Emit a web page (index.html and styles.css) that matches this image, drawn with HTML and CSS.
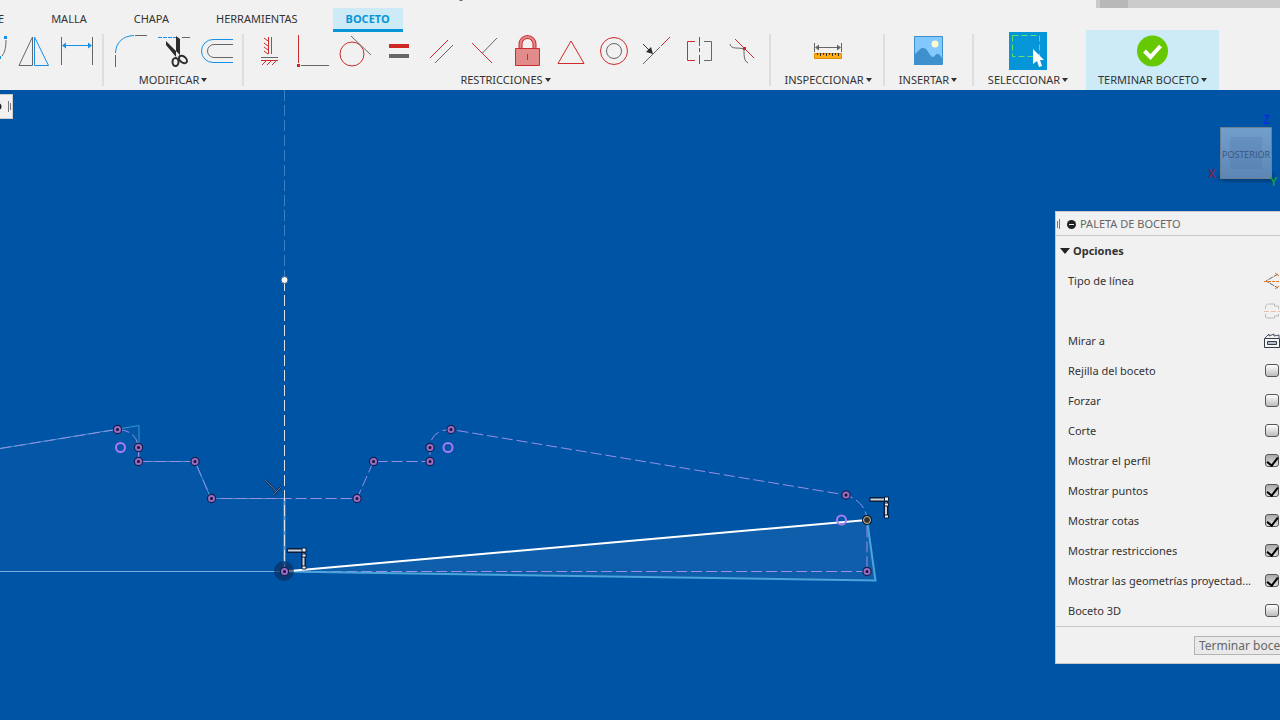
FILE: index.html
```html
<!DOCTYPE html>
<html lang="es">
<head>
<meta charset="utf-8">
<title>Boceto</title>
<link rel="stylesheet" href="styles.css">
</head>
<body>
<header class="ribbon">
  <div class="window-strip"><span class="window-strip-thumb"></span></div>
  <span class="top-mark"></span>
  <nav class="tabs">
    <button class="tab tab-first">E</button>
    <button class="tab">MALLA</button>
    <button class="tab">CHAPA</button>
    <button class="tab">HERRAMIENTAS</button>
    <button class="tab tab-active">BOCETO</button>
  </nav>
  <div class="tools">
    <section class="group group-create">
      <div class="icons">
        <button class="tool" aria-label="Spline"><svg width="42" height="38" viewBox="0 0 42 38"><path class="gray" d="M36 8C36 18 34 21 32 24"/><path class="bluefill" d="M34 4h3v3h-3zM28 24h3v3h-3z"/></svg></button>
        <button class="tool" aria-label="Simetría"><svg width="42" height="38" viewBox="0 0 42 38"><path class="gray" d="M19.500 5V33.500H6z"/><path class="blue" d="M21.500 5V33.500H35.500z"/></svg></button>
        <button class="tool" aria-label="Cota"><svg width="42" height="38" viewBox="0 0 42 38"><path class="gray" d="M5.500 5v28M36.500 5v28"/><path class="blue" d="M8 13.500h26"/><path class="bluefill" d="M6 13.500l4-3v6zM36 13.500l-4-3v6z"/></svg></button>
      </div>
    </section>
    <section class="group group-modify">
      <div class="icons">
        <button class="tool" aria-label="Empalme"><svg width="42" height="38" viewBox="0 0 42 38"><path class="blue" d="M6.500 21C7 10 14 4 25 3.500"/><path class="gray" d="M6.500 23v12M26 3.500h12"/></svg></button>
        <button class="tool" aria-label="Recortar"><svg width="42" height="38" viewBox="0 0 42 38"><path class="blue" d="M6 5.500h20" stroke-dasharray="4 1"/><path class="gray" d="M30 5.500h8"/><path class="ink" d="M14 9v4l10 12 5-1zM24 4l4 3v16l-4 3z"/><ellipse class="loop" cx="23.500" cy="30" rx="3" ry="4"/><ellipse class="loop" cx="31" cy="27.500" rx="3" ry="4.500" transform="rotate(-50 31 27.500)"/></svg></button>
        <button class="tool" aria-label="Desfase"><svg width="42" height="38" viewBox="0 0 42 38"><path class="blue" d="M38 7.500H18a11.500 11.500 0 0 0 0 23h20"/><path class="gray" d="M38 12.500H19a6.500 6.500 0 0 0 0 13h19"/></svg></button>
      </div>
      <button class="group-label">MODIFICAR<i class="caret"></i></button>
    </section>
    <section class="group group-constraints">
      <div class="icons">
        <button class="tool" aria-label="Horizontal/Vertical"><svg width="42" height="38" viewBox="0 0 42 38"><path class="red" d="M20.500 5v17M20 9l-4-3M20 14l-4-3M20 18l-4-3M20 22l-4-3M13 28.500h17M18 29l-4 4M23 29l-4 4M28 29l-4 4"/><path class="gray" d="M23.500 5v17M13 25.500h17"/></svg></button>
        <button class="tool" aria-label="Coincidente"><svg width="42" height="38" viewBox="0 0 42 38"><path class="red" d="M7.500 3v28"/><path class="redfill" d="M6 32h3v3H6z"/><path class="gray" d="M10 33.500h28"/></svg></button>
        <button class="tool" aria-label="Tangente"><svg width="42" height="38" viewBox="0 0 42 38"><circle class="red" cx="18" cy="22" r="12"/><path class="gray" d="M17 4l20 19"/></svg></button>
        <button class="tool" aria-label="Igual"><svg width="42" height="38" viewBox="0 0 42 38"><path class="redfill" d="M12 12h20v4H12z"/><path class="grayfill" d="M12 22h20v4H12z"/></svg></button>
        <button class="tool" aria-label="Paralelo"><svg width="42" height="38" viewBox="0 0 42 38"><path class="red" d="M10 26L28 8"/><path class="gray" d="M15 31l18-18"/></svg></button>
        <button class="tool" aria-label="Perpendicular"><svg width="42" height="38" viewBox="0 0 42 38"><path class="red" d="M9 11l20 20"/><path class="gray" d="M19.500 21L34 6"/></svg></button>
        <button class="tool" aria-label="Fijar"><svg width="42" height="38" viewBox="0 0 42 38"><path class="shackle" d="M14.500 17V12a7 7 0 0 1 14 0v5"/><path class="shackle-fill" d="M14.500 17V12a7 7 0 0 1 14 0v5"/><path class="lock" d="M9.500 16.500h24v17h-24z"/><path class="red" d="M21.500 22v6"/></svg></button>
        <button class="tool" aria-label="Punto medio"><svg width="42" height="38" viewBox="0 0 42 38"><path class="red" d="M22 9L9 31.500h26z"/></svg></button>
        <button class="tool" aria-label="Concéntrico"><svg width="42" height="38" viewBox="0 0 42 38"><circle class="red" cx="22" cy="19" r="13.500"/><circle class="gray" cx="22" cy="19" r="7.500"/></svg></button>
        <button class="tool" aria-label="Colineal"><svg width="42" height="38" viewBox="0 0 42 38"><path class="gray" d="M8 32l17-17"/><path class="red" d="M26 14l9-9"/><path class="darkline" d="M8 12l7 7"/><path class="ink" d="M18 22l-7-2 5-5z"/></svg></button>
        <button class="tool" aria-label="Simétrico"><svg width="42" height="38" viewBox="0 0 42 38"><path class="red" d="M17 9.500H9.500v19H17M21.500 5v9M21.500 16v4M21.500 23v9"/><path class="gray" d="M26 9.500h7.500v19H26"/></svg></button>
        <button class="tool" aria-label="Curvatura"><svg width="42" height="38" viewBox="0 0 42 38"><path class="gray" d="M9 12c1 6 9 3 14 5 0 7 0 12 4 14"/><path class="red" d="M14 7l19 19"/><path class="redfill" d="M22 15h3v3h-3z"/></svg></button>
      </div>
      <button class="group-label">RESTRICCIONES<i class="caret"></i></button>
    </section>
    <section class="group group-inspect">
      <div class="icons">
        <button class="tool" aria-label="Medir"><svg width="42" height="38" viewBox="0 0 42 38"><path class="gray" d="M7.500 11v9M34.500 11v9M9 15.500h24"/><path class="grayfill" d="M8 15.500l4-3v6zM34 15.500l-4-3v6z"/><path class="ruler" d="M7.500 21.500h27v5h-27z"/><path class="darkline" d="M10.500 21v2M13.500 21v3M16.500 21v2M19.500 21v3M22.500 21v2M25.500 21v3M28.500 21v2M31.500 21v3"/></svg></button>
      </div>
      <button class="group-label">INSPECCIONAR<i class="caret"></i></button>
    </section>
    <section class="group group-insert">
      <div class="icons">
        <button class="tool" aria-label="Imagen"><svg width="42" height="38" viewBox="0 0 42 38"><path fill="#83c9ff" d="M7 4h28v29H7z"/><path fill="#3e91cc" d="M7 23c5-4 7-8 10-7 4 1 6 9 9 9 2 0 3-4 5-3 2 0 3 3 4 4v7H7z"/><circle cx="28" cy="12" r="3.500" fill="#fff9ce"/><path fill="none" stroke="#3e91cc" d="M7.500 4.500h28v28h-28z"/></svg></button>
      </div>
      <button class="group-label">INSERTAR<i class="caret"></i></button>
    </section>
    <section class="group group-select">
      <div class="icons">
        <button class="tool" aria-label="Seleccionar"><svg width="38" height="38" viewBox="0 0 38 38"><path fill="#0696d7" d="M0 0h38v38H0z"/><path fill="none" stroke="#5fe06c" stroke-dasharray="6 3" d="M3.500 3.500h27v21h-27z"/><path fill="#fff" d="M24 17v15l4-3 2 6 3-1-2-6h4z"/></svg></button>
      </div>
      <button class="group-label">SELECCIONAR<i class="caret"></i></button>
    </section>
    <section class="group group-finish">
      <div class="icons">
        <button class="tool" aria-label="Terminar"><svg width="42" height="38" viewBox="0 0 42 38"><circle cx="20.500" cy="19" r="15.500" fill="#65c800"/><path fill="none" stroke="#fff" stroke-width="4" d="M12.500 19l6 6 10-11"/></svg></button>
      </div>
      <button class="group-label">TERMINAR BOCETO<i class="caret"></i></button>
    </section>
  </div>
</header>

<main class="canvas">
  <svg class="drawing" aria-label="Área de dibujo">
    <defs>
      <g id="pt"><circle r="3.200" fill="#1a1240" stroke="#17204c" stroke-width="3"/><circle r="2.500" fill="#1a1030" stroke="#9a6cc4" stroke-width="2"/></g>
      <g id="perp"><path d="M-17 -20.500H1M-.5 -18V-3" stroke="#0b1c3a" stroke-width="5"/><path d="M-16 -20.500H0M-.5 -18V-3" stroke="#c9d2dc" stroke-width="2"/><path d="M-2 -23h4v4h-4zM-2 -17h4v3h-4zM-2 -5h4v3h-4z" fill="#eef2f5" stroke="#0b1c3a"/></g>
    </defs>
    <g transform="translate(0 -90)">
      <path d="M0 448L139 425.500V461H195L211 498H284.500V571H0z" fill="#fff" fill-opacity=".015"/>
      <path d="M284 571L867 520L876 580.500z" fill="#fff" fill-opacity=".06"/>
      <path class="axis-faint" d="M284.500 90V280"/>
      <path class="edge-soft" d="M0 448.500L139 425.500V461.500H195L211 498.500H284"/>
      <path class="edge-light" d="M0 571.500H284"/>
      <path class="proj" d="M0 448.500L117 429.500Q136 430 138.500 447V461.500H195L211 498.500H357L373.500 461.500H430V447Q431 430 451 429.500L846 495Q866 502 867 520V571.500H284"/>
      <path class="edge" d="M284 571.500L875.500 580.500L867 520"/>
      <path class="line" d="M284 571.500L867 520"/>
      <path class="edge-under" d="M284.500 498V571"/>
      <path class="axis" d="M284.500 280V571"/>
      <g><path d="M265 480l12 12M273 495l8-8" stroke="#152c50" stroke-width="2"/><path d="M265 480l12 12M273 495l8-8" stroke="#61799a"/></g>
      <circle cx="284" cy="571" r="10" fill="#0b2c5c" fill-opacity=".65"/>
      <g class="rings"><circle cx="120.500" cy="447.500" r="4.500"/><circle cx="448" cy="447.500" r="4.500"/><circle cx="841.500" cy="520" r="4.500"/></g>
      <use href="#pt" x="117.500" y="429.500"/><use href="#pt" x="138.500" y="447.500"/><use href="#pt" x="138.500" y="461.500"/><use href="#pt" x="195" y="461.500"/><use href="#pt" x="211.500" y="498.500"/>
      <use href="#pt" x="357" y="498.500"/><use href="#pt" x="373.500" y="461.500"/><use href="#pt" x="430" y="461.500"/><use href="#pt" x="430" y="447.500"/><use href="#pt" x="451" y="429.500"/><use href="#pt" x="846" y="495"/><use href="#pt" x="867" y="571.500"/><use href="#pt" x="284.500" y="571.500"/>
      <circle cx="867" cy="520" r="3.500" fill="#333" stroke="#111" stroke-width="3"/><circle cx="867" cy="520" r="3.500" fill="#333" stroke="#c9c4b8"/>
      <circle cx="284.500" cy="280" r="3.500" fill="#f4f4f4" stroke="#3c5a80"/>
      <use href="#perp" x="304" y="571"/><use href="#perp" x="886.500" y="520"/>
    </g>
  </svg>

  <div class="browser-tab"><svg width="12" height="23" viewBox="0 0 12 23"><circle cx="-2" cy="11.500" r="3.500" fill="#222"/><path d="M8.500 6v11M10.500 8v7" stroke="#777"/></svg></div>

  <div class="viewcube">
    <svg width="74" height="80" viewBox="0 0 74 80">
      <defs>
        <linearGradient id="face" x2="0" y2="1"><stop stop-color="#739fcd"/><stop offset="1" stop-color="#5c86b5"/></linearGradient>
        <filter id="soft"><feGaussianBlur stdDeviation="2"/></filter>
      </defs>
      <path d="M10 68l6-5h52v9H20z" fill="#063c77" filter="url(#soft)"/>
      <path d="M14.500 17.500h51v51h-51z" fill="url(#face)" stroke="#6b7f95"/>
      <path d="M24 27h32v32H24z" fill="#3f6ea7" fill-opacity=".2"/>
      <text class="cube-face" x="40" y="48">POSTERIOR</text>
      <text class="axis-z" x="57" y="14">Z</text><text class="axis-x" x="2" y="68">X</text><text class="axis-y" x="64" y="76">Y</text>
    </svg>
  </div>

  <aside class="palette">
    <h2 class="palette-title"><svg width="24" height="14" viewBox="0 0 24 14"><path d="M1.500 4v7M3.500 2v10" stroke="#777"/><circle cx="15.500" cy="7.500" r="4.500" fill="#222"/><path d="M13 7.500h5" stroke="#eee"/></svg>PALETA DE BOCETO</h2>
    <h3 class="section-title"><i class="disclosure"></i>Opciones</h3>
    <div class="row"><span>Tipo de línea</span><button class="opt" aria-label="Construcción"><svg width="16" height="18" viewBox="0 0 16 18"><path d="M14 2L2 9l12 7" fill="none" stroke="#666" stroke-dasharray="5 1"/><path d="M0 9.500h16" stroke="#e8761b" stroke-dasharray="3 1"/><path d="M11 1l4 3M11 17l4-3" stroke="#e8761b"/></svg></button></div>
    <div class="row"><span></span><button class="opt" aria-label="Línea de eje"><svg width="16" height="18" viewBox="0 0 16 18"><path d="M1.500 7V4l2-2h7v2h4v3M1.500 12v3l1 1h8v-2h4v-2" fill="none" stroke="#bbb"/><path d="M0 9.500h16" stroke="#edbca4" stroke-dasharray="5 2"/></svg></button></div>
    <div class="row"><span>Mirar a</span><button class="opt" aria-label="Mirar a"><svg width="16" height="18" viewBox="0 0 16 18"><path d="M.5 6.500h15v9H.5z" fill="#f7f7f7" stroke="#333b49"/><path d="M3.500 9.500h9v3h-9z" fill="#b4bdce" stroke="#333b49"/><path d="M1 6l4-4v2l5-2v2l5-1v3" fill="none" stroke="#4a5260"/></svg></button></div>
    <div class="row"><label for="o1">Rejilla del boceto</label><input class="check" type="checkbox" id="o1"></div>
    <div class="row"><label for="o2">Forzar</label><input class="check" type="checkbox" id="o2"></div>
    <div class="row"><label for="o3">Corte</label><input class="check" type="checkbox" id="o3"></div>
    <div class="row"><label for="o4">Mostrar el perfil</label><input class="check" type="checkbox" id="o4" checked></div>
    <div class="row"><label for="o5">Mostrar puntos</label><input class="check" type="checkbox" id="o5" checked></div>
    <div class="row"><label for="o6">Mostrar cotas</label><input class="check" type="checkbox" id="o6" checked></div>
    <div class="row"><label for="o7">Mostrar restricciones</label><input class="check" type="checkbox" id="o7" checked></div>
    <div class="row"><label for="o8">Mostrar las geometrías proyectad...</label><input class="check" type="checkbox" id="o8" checked></div>
    <div class="row"><label for="o9">Boceto 3D</label><input class="check" type="checkbox" id="o9"></div>
    <footer class="palette-footer"><button class="finish">Terminar boceto</button></footer>
  </aside>
</main>
</body>
</html>
```

FILE: styles.css
```css
* { box-sizing: border-box; }
body {
  margin: 0;
  height: 100vh;
  display: flex;
  flex-direction: column;
  overflow: hidden;
  font-family: "Noto Sans", "Open Sans", sans-serif;
  font-size: 11px;
  line-height: 14px;
  color: #333;
}
button {
  padding: 0;
  border: 0;
  background: none;
  font: inherit;
  color: inherit;
  white-space: nowrap;
}
svg { display: block; flex: none; }

.ribbon {
  position: relative;
  flex: none;
  overflow: hidden;
  background: #f1f1f1;
}
.window-strip {
  position: absolute;
  top: 0;
  right: 0;
  width: 184px;
  height: 8px;
  padding-left: 4px;
  background: #cbcbcb;
}
.window-strip-thumb { display: block; width: 28px; height: 8px; background: #b8b8b8; }
.top-mark {
  position: absolute;
  top: -3px;
  left: 459px;
  width: 4px;
  height: 4px;
  border-radius: 2px;
  background: #555;
}
.tabs { display: flex; gap: 23px; padding-top: 8px; height: 32px; }
.tab { padding: 0 12px; height: 22px; }
.tab-first { padding-left: 0; margin-left: -2px; }
.tab-active {
  height: 24px;
  padding: 0 13px;
  background: #cdebf7;
  border-bottom: 3px solid #0696d7;
  color: #0696d7;
  font-weight: 700;
}

.tools { display: flex; height: 58px; }
.group {
  position: relative;
  flex: none;
  display: flex;
  flex-direction: column;
  align-items: center;
}
.group:not(.group-finish):not(.group-select)::after {
  content: "";
  position: absolute;
  right: 0;
  top: 2px;
  bottom: 4px;
  width: 2px;
  background: #dedede;
}
.group-create { width: 104px; align-items: flex-end; padding-right: 6px; }
.group-modify { width: 140px; padding-right: 2px; }
.group-constraints { width: 527px; padding-right: 4px; }
.group-inspect { width: 114px; }
.group-insert { width: 89px; padding-right: 3px; }
.group-select { width: 112px; padding-right: 4px; }
.group-finish { width: 133px; margin-top: -2px; padding-top: 2px; background: #cdebf7; }
.icons { display: flex; height: 38px; }
.tool { width: 43px; height: 38px; display: flex; justify-content: center; }
.group-label { display: flex; align-items: center; gap: 2px; margin-top: 3px; height: 14px; }
.caret { border: 3px solid transparent; border-top: 4px solid #333; border-bottom: 0; }

.gray, .blue, .red { fill: none; stroke-width: 1; }
.gray { stroke: #666; }
.blue { stroke: #1490e8; }
.red { stroke: #cf2b2b; }
.bluefill { fill: #1490e8; }
.redfill { fill: #cf2626; }
.grayfill { fill: #666; }
.ink { fill: #2d2d2d; }
.loop { fill: none; stroke: #2d2d2d; stroke-width: 2; }
.darkline { fill: none; stroke: #333; }
.shackle { fill: none; stroke: #cf2b2b; stroke-width: 4; }
.shackle-fill { fill: none; stroke: #e18b8b; stroke-width: 2; }
.lock { fill: #e18b8b; stroke: #cf2b2b; }
.ruler { fill: #ffad14; stroke: #d98e08; }

.canvas { position: relative; flex: 1; min-height: 0; overflow: hidden; background: #0054a6; }
.drawing { display: block; width: 100%; height: 100%; fill: none; }
.axis-faint { stroke: #3a80c2; stroke-dasharray: 11 4; }
.axis { stroke: #dfe3e8; stroke-dasharray: 11 4; }
.edge-soft { stroke: #3c95cc; }
.edge-under { stroke: #5e9fd6; stroke-width: 2; }
.edge-light { stroke: #78aee0; }
.proj { stroke: #9a8fe4; stroke-dasharray: 11 4; }
.edge { stroke: #4ca5da; stroke-width: 2; }
.line { stroke: #fff; stroke-width: 2; }
.rings { stroke: #a87cf0; stroke-width: 2; }

.browser-tab {
  position: absolute;
  top: 4px;
  left: 0;
  background: #f1f1f1;
  border: 1px solid #ccc;
  border-left: 0;
}
.viewcube { position: absolute; top: 20px; right: 0; }
.viewcube text { font-size: 12px; font-weight: 600; }
.viewcube .cube-face {
  font-family: "Open Sans", sans-serif;
  font-size: 9px;
  font-weight: 400;
  text-anchor: middle;
  fill: #36567c;
}
.axis-z { fill: #0a2ce0; }
.axis-x { fill: #7a2457; }
.axis-y { fill: #12a04a; }

.palette {
  position: absolute;
  top: 121px;
  right: 0;
  width: 225px;
  overflow: hidden;
  background: #f1f1f1;
  border: 1px solid #c8c8c8;
  border-right: 0;
}
.palette h2, .palette h3 { margin: 0; font-size: 11px; }
.palette .palette-title {
  display: flex;
  align-items: center;
  height: 24px;
  border-bottom: 1px solid #c8c8c8;
  font-weight: 400;
  color: #666;
}
.section-title { display: flex; align-items: center; gap: 3px; height: 30px; padding-left: 4px; }
.disclosure { border: 5px solid transparent; border-top: 6px solid #222; border-bottom: 0; }
.row {
  display: flex;
  align-items: center;
  justify-content: space-between;
  height: 30px;
  padding-left: 12px;
  white-space: nowrap;
}
.check {
  appearance: none;
  flex: none;
  width: 14px;
  height: 13px;
  margin: 0 1px 1px 0;
  border: 1px solid #555;
  border-radius: 3px;
  background: linear-gradient(#fff, #bbb);
}
.check:checked { background: linear-gradient(#aaa, #ddd); }
.check:checked::after {
  content: "";
  display: block;
  width: 5px;
  height: 9px;
  margin-left: 3px;
  border: solid #000;
  border-width: 0 2px 2px 0;
  transform: rotate(38deg);
}
.palette-footer { height: 37px; padding: 9px 0 0 138px; border-top: 1px solid #c8c8c8; }
.finish {
  height: 19px;
  padding: 0 4px;
  border: 1px solid #b4b4b4;
  background: #e9e9e9;
  font-size: 12px;
  line-height: 17px;
  color: #666;
}
```
